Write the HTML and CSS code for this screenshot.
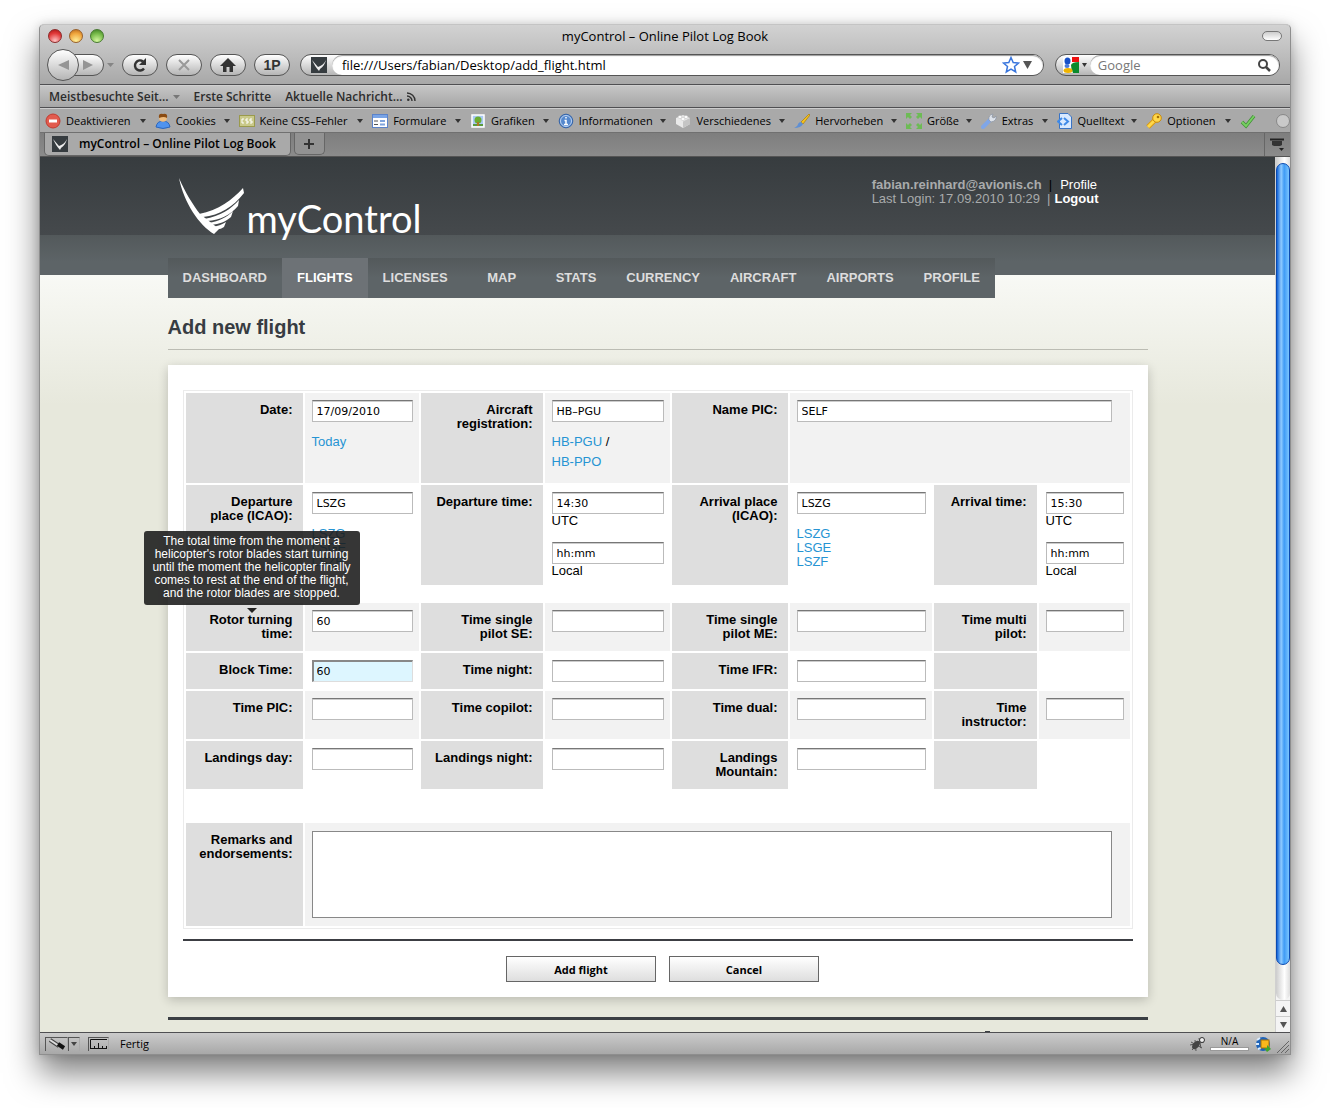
FILE: index.html
```html
<!DOCTYPE html>
<html lang="en">
<head>
<meta charset="utf-8">
<title>myControl – Online Pilot Log Book</title>
<link rel="stylesheet" href="styles.css">
</head>
<body>
<svg class="defs" aria-hidden="true">
  <symbol id="mark" viewBox="0 0 16 16"><rect width="16" height="16" fill="#363c40"/><path d="M1 3 C3 7 5 11 8 14 L9 12 C12 10 14 7 15 3 C13 7 10 9 7 10 C5 8 3 5 1 3Z" fill="#eee"/></symbol>
</svg>
<div class="window">
  <div class="titlebar">
    <div class="lights"><span class="light red"></span><span class="light amber"></span><span class="light green"></span></div>
    <div class="window-title">myControl – Online Pilot Log Book</div>
    <button class="pill-toggle" aria-label="Toggle toolbar"></button>
  </div>

  <div class="navbar">
    <div class="history">
      <button class="back" aria-label="Back"><svg width="12" height="12"><path d="M12 1V11L1 6Z" fill="#959595"/></svg></button>
      <button class="forward" aria-label="Forward"><svg width="10" height="10"><path d="M0 0V10L10 5Z" fill="#959595"/></svg></button>
    </div>
    <svg class="history-arrow" width="7" height="5"><path d="M0 0H7L3.500 4Z" fill="#858585"/></svg>
    <button class="round" aria-label="Reload"><svg width="16" height="16"><path d="M12 11.500A5 5 0 1 1 11 4.500" fill="none" stroke="#333" stroke-width="2.400"/><path d="M14 1V8H7Z" fill="#333"/></svg></button>
    <button class="round" aria-label="Stop"><svg width="12" height="12"><path d="M1 1L11 11M11 1L1 11" stroke="#999" stroke-width="2"/></svg></button>
    <button class="round" aria-label="Home"><svg width="16" height="14"><path d="M8 0L16 8H13V14H9.500V9H6.500V14H3V8H0Z" fill="#333"/></svg></button>
    <button class="round">1P</button>
    <div class="address">
      <svg class="site-mark" width="16" height="16"><use href="#mark"/></svg>
      <div class="address-box">
        <input aria-label="Address" value="file:///Users/fabian/Desktop/add_flight.html">
        <svg width="18" height="18" viewBox="0 0 18 18"><path d="M9 1.500L11.200 6.500L16.500 7L12.500 10.500L13.700 16L9 13.200L4.300 16L5.500 10.500L1.500 7L6.800 6.500Z" fill="#fff" stroke="#3a76dd" stroke-width="1.500"/></svg>
        <svg width="9" height="8"><path d="M0 0H9L4.500 8Z" fill="#555"/></svg>
      </div>
    </div>
    <div class="search">
      <svg class="engine" width="16" height="16"><rect width="16" height="16" fill="#fff"/><path d="M9 0H16V5H9Z" fill="#e11"/><path d="M8 8Q9 5 16 5V16H10Q8 12 8 8Z" fill="#0a8a2c"/><ellipse cx="4.500" cy="4" rx="3" ry="3.500" fill="#1750c8"/><ellipse cx="4" cy="9" rx="2.500" ry="2" fill="#4a79d8"/><ellipse cx="5" cy="13.500" rx="4.500" ry="2.500" fill="#f0b400"/></svg>
      <svg width="5" height="4"><path d="M0 0H5L2.500 4Z" fill="#333"/></svg>
      <div class="search-box">
        <input aria-label="Search" placeholder="Google">
        <svg width="13" height="13"><circle cx="5" cy="5" r="4" fill="none" stroke="#444" stroke-width="2"/><path d="M8 8L12 12" stroke="#444" stroke-width="2.500"/></svg>
      </div>
    </div>
  </div>

  <div class="bookmarks">
    <a href="#">Meistbesuchte Seit… <svg width="7" height="4"><path d="M0 0H7L3.500 4Z" fill="#777"/></svg></a>
    <a href="#">Erste Schritte</a>
    <a href="#">Aktuelle Nachricht… <svg width="9" height="9"><path d="M0 1A8 8 0 0 1 8 9M0 4A5 5 0 0 1 5 9" fill="none" stroke="#333" stroke-width="1.400"/><circle cx="1.300" cy="7.700" r="1.300" fill="#333"/></svg></a>
  </div>

  <div class="devbar">
    <button><svg width="16" height="16"><circle cx="8" cy="8" r="7" fill="#e25b4e" stroke="#c33b30"/><rect x="4" y="6.500" width="8" height="3" fill="#fff"/></svg>Deaktivieren</button>
    <button><svg width="16" height="16"><path d="M1 14Q2 8 8 8T15 14Q8 17 1 14Z" fill="#4f93ee" stroke="#2d66bb"/><circle cx="8" cy="5" r="3.800" fill="#f0bd7e"/><path d="M4 5Q3 0 8 1Q13 0 12 5Q9 3 4 5Z" fill="#8a4b12"/></svg>Cookies</button>
    <button><svg width="16" height="16"><rect x=".5" y="2.500" width="15" height="11" fill="#c9c98a" stroke="#9a9a4c"/><path d="M5 6H3V10H5M9 6H7V8H9V10H7M13 6H11V8H13V10H11" fill="none" stroke="#fff"/></svg>Keine CSS–Fehler</button>
    <button><svg width="16" height="16"><rect x=".5" y="1.500" width="15" height="13" fill="#fff" stroke="#5b83c9"/><path d="M1 3.500H15" stroke="#79a4e6" stroke-width="3"/><path d="M2 8H6M2 11.500H6" stroke="#555"/><path d="M8 8H13M8 11.500H13" stroke="#7fa4dd" stroke-width="2"/></svg>Formulare</button>
    <button><svg width="16" height="16"><rect x="2" y="2" width="12" height="12" fill="#a9c9f4" stroke="#fff" stroke-width="1.500"/><path d="M3 11H13V13H3Z" fill="#5c9b3c"/><circle cx="8" cy="7" r="3.500" fill="#6cae32"/><path d="M8 9V13" stroke="#b0772a" stroke-width="2"/></svg>Grafiken</button>
    <button><svg width="16" height="16"><circle cx="8" cy="8" r="6.800" fill="#5588cd" stroke="#3463a8"/><circle cx="8" cy="8" r="5.500" fill="none" stroke="#bcd3f2"/><path d="M8 4V5.500M6.500 7.500H8V11.500M6 11.500H10" stroke="#fff" stroke-width="1.500" fill="none"/></svg>Informationen</button>
    <button><svg width="16" height="16"><path d="M1 5L8 2L15 5V11L8 15L1 11Z" fill="#e9e9e9"/><path d="M8 8.500L15 5V11L8 15Z" fill="#c5c5c5"/><ellipse cx="5" cy="4" rx="2" ry="1.500" fill="#fff" stroke="#bbb" stroke-width=".5"/><ellipse cx="11" cy="4" rx="2" ry="1.500" fill="#fff" stroke="#bbb" stroke-width=".5"/><ellipse cx="8" cy="6" rx="2" ry="1.500" fill="#fff" stroke="#bbb" stroke-width=".5"/></svg>Verschiedenes</button>
    <button><svg width="16" height="16"><path d="M15 1L7 9L9 11L16 2Z" fill="#f4c11d" stroke="#a97b0a" stroke-width=".7"/><path d="M7 9L9 11Q7 15 0 15Q4 13 4 11Q5 9 7 9Z" fill="#5f8fd3"/></svg>Hervorheben</button>
    <button><svg width="16" height="16" fill="#6dbb55"><path d="M0 0H6L4 2L6 4L4 6L2 4L0 6ZM16 0H10L12 2L10 4L12 6L14 4L16 6ZM0 16H6L4 14L6 12L4 10L2 12L0 10ZM16 16H10L12 14L10 12L12 10L14 12L16 10Z"/></svg>Größe</button>
    <button><svg width="16" height="16"><path d="M2 14L9 7" stroke="#7fa6e8" stroke-width="4" stroke-linecap="round"/><path d="M8 7Q7 2 12 1L11 4L13 5L15 3Q16 8 10 9Z" fill="#dde2ea" stroke="#8a93a3" stroke-width=".7"/></svg>Extras</button>
    <button><svg width="16" height="16"><path d="M2.500 .5H11L14.500 4V15.500H2.500Z" fill="#d8e9ff" stroke="#3973c4"/><path d="M5 5L1 8.500L5 12M7 5L11 8.500L7 12" fill="none" stroke="#3f8ae8" stroke-width="2"/></svg>Quelltext</button>
    <button><svg width="16" height="16"><path d="M2 14L9 7" stroke="#d99a10" stroke-width="5"/><path d="M2 14L9 7" stroke="#ffd84a" stroke-width="3"/><circle cx="11" cy="5" r="4.300" fill="#ffd84a" stroke="#c98a0c"/><circle cx="12" cy="4" r="1.300" fill="#a56f05"/></svg>Optionen</button>
    <span class="check"><svg width="16" height="16"><path d="M2 9L6 13L14 3" fill="none" stroke="#3f8f35" stroke-width="3.500"/><path d="M2 9L6 13L14 3" fill="none" stroke="#77cf62" stroke-width="2"/></svg></span>
    <span class="dot"></span>
  </div>

  <div class="tabs">
    <button class="tab"><svg width="16" height="16"><use href="#mark"/></svg>myControl – Online Pilot Log Book</button>
    <button class="new-tab" aria-label="New tab"><svg width="10" height="10"><path d="M5 0V10M0 5H10" stroke="#333" stroke-width="2"/></svg></button>
    <button class="tab-list" aria-label="List all tabs"><svg width="15" height="13"><path d="M0 1.500H14" stroke="#222" stroke-width="2"/><path d="M2 3H12V7L10 8H4L2 7Z" fill="#333"/><path d="M9 10H14L11.500 13Z" fill="#222"/></svg></button>
  </div>

  <div class="viewport">
    <div class="page">
      <header class="page-head">
        <div class="container head-row">
          <a class="logo" href="#">
            <svg width="66" height="58" viewBox="0 0 66 58" fill="#fff"><path d="M0 0C6 14 14 27 21 36L40 51L35 56C20 47 5 25 0 0Z"/><path d="M20 36C40 32 53 22 64 10L65 15C54 29 41 37 24 39Z"/><path d="M25 41C42 38 52 31 60 22L59 28C51 37 42 42 28 43Z"/><path d="M29 45C41 43 48 39 54 33L52 39C46 44 41 46 32 47Z"/><path d="M33 49Q41 48 47 44L45 49Q41 52 36 51Z"/></svg>
            <span>myControl</span>
          </a>
          <div class="account">
            <div><b>fabian.reinhard@avionis.ch</b><i class="bar dark">|</i><a href="#">Profile</a></div>
            <div>Last Login: 17.09.2010 10:29<i class="bar">|</i><a href="#"><b>Logout</b></a></div>
          </div>
        </div>
      </header>
      <div class="container">
        <nav class="menu">
          <a href="#">Dashboard</a><a href="#" class="current">Flights</a><a href="#">Licenses</a><a href="#" class="short">Map</a><a href="#">Stats</a><a href="#">Currency</a><a href="#">Aircraft</a><a href="#">Airports</a><a href="#">Profile</a>
        </nav>
        <h1>Add new flight</h1>
        <form class="card">
          <div class="sheet">
            <div class="grid">
              <label for="date">Date:</label>
              <div class="field tinted"><input id="date" value="17/09/2010"><p class="picks"><a href="#">Today</a></p></div>
              <label for="reg">Aircraft registration:</label>
              <div class="field tinted"><input id="reg" value="HB–PGU"><p class="picks"><a href="#">HB-PGU</a> /<br><a href="#">HB-PPO</a></p></div>
              <label for="pic">Name PIC:</label>
              <div class="field tinted span3"><input id="pic" value="SELF"></div>

              <label for="dep">Departure place (ICAO):</label>
              <div class="field"><input id="dep" value="LSZG"><p class="codes"><a href="#">LSZG</a><a href="#">LSGE</a><a href="#">LSZF</a></p></div>
              <label for="dep-utc">Departure time:</label>
              <div class="field times"><div><input id="dep-utc" value="14:30">UTC</div><div><input aria-label="Departure time, local" value="hh:mm">Local</div></div>
              <label for="arr">Arrival place (ICAO):</label>
              <div class="field"><input id="arr" value="LSZG"><p class="codes"><a href="#">LSZG</a><a href="#">LSGE</a><a href="#">LSZF</a></p></div>
              <label for="arr-utc">Arrival time:</label>
              <div class="field times"><div><input id="arr-utc" value="15:30">UTC</div><div><input aria-label="Arrival time, local" value="hh:mm">Local</div></div>
            </div>

            <div class="grid">
              <label for="rotor" class="has-tip">Rotor turning time:<span class="tip" role="tooltip">The total time from the moment a helicopter's rotor blades start turning until the moment the helicopter finally comes to rest at the end of the flight, and the rotor blades are stopped.</span></label>
              <div class="field tinted"><input id="rotor" value="60"></div>
              <label for="se">Time single pilot SE:</label><div class="field tinted"><input id="se"></div>
              <label for="me">Time single pilot ME:</label><div class="field tinted"><input id="me"></div>
              <label for="multi">Time multi pilot:</label><div class="field tinted"><input id="multi"></div>

              <label for="block">Block Time:</label><div class="field"><input id="block" class="active" value="60"></div>
              <label for="night">Time night:</label><div class="field"><input id="night"></div>
              <label for="ifr">Time IFR:</label><div class="field"><input id="ifr"></div>
              <div class="blank"></div><div></div>

              <label for="tpic">Time PIC:</label><div class="field tinted"><input id="tpic"></div>
              <label for="cop">Time copilot:</label><div class="field tinted"><input id="cop"></div>
              <label for="dual">Time dual:</label><div class="field tinted"><input id="dual"></div>
              <label for="inst">Time instructor:</label><div class="field tinted"><input id="inst"></div>

              <label for="lday">Landings day:</label><div class="field"><input id="lday"></div>
              <label for="lnight">Landings night:</label><div class="field"><input id="lnight"></div>
              <label for="lmount">Landings Mountain:</label><div class="field"><input id="lmount"></div>
              <div class="blank"></div><div></div>
            </div>

            <div class="grid remarks">
              <label for="remarks">Remarks and endorsements:</label>
              <div class="field tinted span7"><textarea id="remarks"></textarea></div>
            </div>
          </div>
          <div class="actions"><button type="button">Add flight</button><button type="button">Cancel</button></div>
        </form>
        <footer class="page-foot"><span class="foot-mark"></span></footer>
      </div>
    </div>
    <div class="scrollbar">
      <div class="track"><div class="thumb"></div></div>
      <button aria-label="Scroll up"><svg width="7" height="6"><path d="M3.500 0L7 6H0Z" fill="#555"/></svg></button>
      <button aria-label="Scroll down"><svg width="7" height="6"><path d="M3.500 6L7 0H0Z" fill="#555"/></svg></button>
    </div>
  </div>

  <div class="statusbar">
    <span class="tool"><svg width="18" height="13"><path d="M2 2L11 8" stroke="#444" stroke-width="4"/><path d="M2 2L11 8" stroke="#ddd" stroke-width="2"/><path d="M10 6L16 10" stroke="#111" stroke-width="4"/></svg></span>
    <span class="tool narrow"><svg width="6" height="4"><path d="M0 0H6L3 4Z" fill="#444"/></svg></span>
    <span class="tool ruler"><svg width="19" height="12"><path d="M1.500 11V1.500H18M1 10.500H18M5.500 11V8M9.500 11V5M13.500 11V8M17.500 11V8" fill="none" stroke="#111"/></svg></span>
    <span class="status">Fertig</span>
    <svg class="bug" width="17" height="16"><path d="M1 9L15 6M3 14L13 3M7 15L6 4M2 6L13 12M10 2L12 12" stroke="#555"/><ellipse cx="7" cy="9" rx="3" ry="5" transform="rotate(40 7 9)" fill="#444"/><circle cx="13" cy="4" r="2.500" fill="#eee" stroke="#333"/></svg>
    <span class="rank">N/A<span class="rank-bar"></span></span>
    <svg width="16" height="16"><circle cx="8" cy="8" r="7" fill="#1e63b8"/><path d="M2 4L5 2M1 8H4M3 13L6 12" stroke="#d9ecff" stroke-width="2"/><rect x="6" y="4" width="8" height="8" fill="#f9b81d" stroke="#a87208"/><path d="M9 12H12V9L16 13L12 16Z" fill="#41a52c"/></svg>
    <svg class="grip" width="12" height="12"><path d="M0 12L12 0M4 12L12 4M8 12L12 8" stroke="#666"/></svg>
  </div>
</div>
</body>
</html>
```
FILE: styles.css
```css
* { box-sizing: border-box; }

body {
  margin: 0;
  min-height: 100vh;
  padding: 24px 39px 54px;
  display: flex;
  background: #fff;
  font-family: "Liberation Sans", Arial, sans-serif;
  font-size: 13px;
  line-height: 14px;
  color: #000;
}

button, input, textarea { font: inherit; color: inherit; margin: 0; }
button { display: inline-flex; align-items: center; justify-content: center; padding: 0; border: 0; background: none; }
svg { display: block; flex: none; }
a { text-decoration: none; }
p { margin: 0; }
.defs { position: absolute; width: 0; height: 0; }

.window {
  flex: 1;
  min-width: 0;
  display: flex;
  flex-direction: column;
  border: 1px solid #8e8e8e;
  border-top-color: #c4c4c4;
  border-radius: 5px 5px 0 0;
  background: #a7a7a7;
  box-shadow: 0 18px 32px rgba(0, 0, 0, .5), 0 0 10px rgba(0, 0, 0, .15);
}

.titlebar, .navbar, .bookmarks, .devbar, .tabs, .statusbar { font-family: "Open Sans", "Noto Sans", sans-serif; }

/* Browser chrome */
.titlebar {
  display: flex;
  align-items: center;
  justify-content: space-between;
  height: 21px;
  padding: 0 8px;
  border-radius: 4px 4px 0 0;
  background: linear-gradient(#d2d2d2, #c4c4c4);
}
.lights { display: flex; gap: 7px; width: 56px; }
.light { width: 14px; height: 14px; border-radius: 50%; border: 1px solid; }
.red { background: radial-gradient(circle at 50% 90%, #ffc5c5, #e23b3b 60%, #a11); border-color: #8c2a2a; }
.amber { background: radial-gradient(circle at 50% 90%, #fff09a, #f0a63d 60%, #b8651a); border-color: #98602a; }
.green { background: radial-gradient(circle at 50% 90%, #d5f8a0, #75b948 60%, #3b7a22); border-color: #477a30; }
.window-title { font-size: 13px; }
.pill-toggle { width: 20px; height: 10px; margin-left: 36px; border: 1px solid #777; border-radius: 5px; background: linear-gradient(#ccc, #fff); }

.navbar {
  display: flex;
  align-items: center;
  gap: 8px;
  height: 39px;
  padding: 0 10px 0 7px;
  border-bottom: 1px solid #4f4f52;
  background: linear-gradient(#c4c4c4, #a8a8a8);
}
.history { display: flex; align-items: center; }
.back { position: relative; width: 32px; height: 32px; border: 1px solid #555; border-radius: 50%; background: linear-gradient(#fff, #b5b5b5); }
.forward { width: 32px; height: 22px; margin-left: -7px; border: 1px solid #555; border-radius: 0 11px 11px 0; background: linear-gradient(#fff, #b5b5b5); }
.history-arrow { margin-left: -5px; }
.round { width: 36px; height: 22px; border: 1px solid #555; border-radius: 11px; background: linear-gradient(#fff, #b5b5b5); font: bold 14px "Liberation Sans", Arial, sans-serif; color: #333; }
.address, .search { display: flex; align-items: center; height: 22px; border: 1px solid #555; border-radius: 11px; background: linear-gradient(#fff, #b5b5b5); }
.address { flex: 748 1 0; min-width: 0; gap: 5px; margin-left: 2px; padding-left: 10px; }
.search { flex: 221 1 0; min-width: 0; gap: 3px; margin-left: 3px; padding-left: 7px; }
.address-box, .search-box { flex: 1; min-width: 0; display: flex; align-items: center; gap: 3px; height: 20px; border-radius: 10px; background: #fff; padding: 0 11px 0 10px; box-shadow: inset 0 1px 1px #999; }
.search-box { padding: 0 8px; }
.address-box input, .search-box input { flex: 1; min-width: 0; height: 20px; padding: 0; border: 0; outline: 0; background: none; font-size: 13px; }
.search-box input::placeholder { color: #777; opacity: 1; }

.bookmarks {
  display: flex;
  align-items: center;
  gap: 14px;
  height: 23px;
  padding: 0 9px;
  border-top: 1px solid #d0d0d0;
  border-bottom: 1px solid #4f4f52;
  background: linear-gradient(#c5c5c5, #a6a6a6);
  font-size: 12px;
  font-weight: 600;
}
.bookmarks a { display: flex; align-items: center; gap: 4px; color: #2c2c2c; }

.devbar {
  display: grid;
  grid-template-columns: 110fr 84fr 134fr 98fr 88fr 118fr 119fr 112fr 75fr 76fr 90fr 94fr 36fr 11fr;
  align-items: center;
  height: 24px;
  padding-left: 5px;
  border-top: 1px solid #ccc;
  background: #a9a9a9;
  font-size: 11px;
  overflow: hidden;
}
.devbar button { justify-content: flex-start; gap: 5px; padding-right: 9px; white-space: nowrap; min-width: 0; }
.devbar button::after { content: ""; margin-left: auto; border: 3px solid transparent; border-top: 4px solid #333; border-bottom: 0; }
.dot { width: 14px; height: 14px; border: 1px solid #888; border-radius: 50%; background: #c9c9c9; }

.tabs { display: flex; align-items: flex-start; gap: 3px; height: 25px; padding-left: 4px; border-top: 1px solid #707070; border-bottom: 1px solid #555; background: linear-gradient(#7e7e7e, #8b8b8b); }
.tab { gap: 11px; height: 23px; padding: 0 14px 0 7px; border: 1px solid #666; border-top: 0; border-radius: 0 0 5px 5px; background: #a9a9a9; font-size: 12px; font-weight: 600; white-space: nowrap; }
.new-tab { width: 31px; height: 22px; border: 1px solid #666; border-top: 0; border-radius: 0 0 5px 5px; background: #929292; }
.tab-list { width: 26px; height: 23px; margin-left: auto; border-left: 1px solid #666; }

/* Page */
.viewport { flex: 1; display: flex; }
.page { flex: 1; min-width: 0; background: linear-gradient(#f8f9f5, #e7e8dc 130px) 0 118px no-repeat #e7e8dc; }
.container { max-width: 980px; margin: 0 auto; }
.page-head { height: 118px; background: linear-gradient(#373c3f, #45494c 78px, #53595b 78px, #5d6467 105px); }
.head-row { display: flex; justify-content: space-between; align-items: flex-start; padding: 21px 49px 0 11px; }
.logo { display: flex; gap: 2px; color: #fff; }
.logo span { font: 400 38px/40px Lato, sans-serif; padding-top: 20px; }
.account { color: #a9abac; }
.account a { color: #fff; }
.bar { font-style: normal; padding: 0 4px 0 7px; }
.bar.dark { color: #000; padding-right: 8px; }

.menu { display: flex; width: fit-content; margin-top: -17px; background: linear-gradient(#53595b, #5d6467 20px); position: relative; }
.menu a { padding: 0 15px; line-height: 40px; text-align: center; text-transform: uppercase; font-weight: bold; color: #ddd; }
.menu a.current { background: #6d7276; color: #fff; }
.menu a.short { min-width: 78px; }

h1 { margin: 0; padding: 17px 0 10px; border-bottom: 1px solid #bbbcb3; font-size: 20px; line-height: 24px; color: #373c42; }

.card { margin-top: 15px; padding: 25px 15px 15px; background: #fff; box-shadow: 0 3px 10px rgba(0, 0, 0, .2); }
.sheet { padding: 2px; border: 1px solid #ebebeb; display: flex; flex-direction: column; gap: 18px; }
.grid { display: grid; gap: 2px; grid-template-columns: 117fr 114fr 122fr 125fr 116fr 142fr 103fr 91fr; }
.grid > * { min-width: 0; }
.grid > label, .blank { padding: 10px; background: #dedede; text-align: right; font-weight: bold; }
.field { padding: 7px 6px 7px 7px; }
.tinted { background: #f2f2f2; }
.span3 { grid-column: span 3; padding-right: 18px; }
.span7 { grid-column: span 7; padding: 8px 18px 8px 7px; }
.remarks { margin-top: 16px; }

.field input {
  display: block;
  width: 100%;
  height: 22px;
  padding: 0 4px;
  border: 1px solid #bbb;
  border-top: 1px solid #777;
  background: #fff;
  box-shadow: inset 0 1px 0 #ccc;
  font: 11px "DejaVu Sans", sans-serif;
}
.field input.active { border: 1px solid #ddd; border-top: 2px solid #888; border-left: 2px solid #888; padding-left: 3px; background: #ddf6ff; box-shadow: none; outline: 0; }
.field textarea { display: block; width: 100%; height: 87px; border: 1px solid #888; background: #fff; resize: none; }
.field a { color: #2694d3; }
.picks { padding: 10px 0 4px; line-height: 20px; }
.codes { display: flex; flex-direction: column; align-items: flex-start; padding-top: 13px; }
.times { display: flex; flex-direction: column; gap: 14px; }

.has-tip { position: relative; }
.tip {
  position: absolute;
  left: -42px;
  bottom: 46px;
  width: 216px;
  padding: 4px 8px 5px;
  border-radius: 3px;
  background: rgba(26, 26, 26, .88);
  color: #fff;
  font-size: 12px;
  font-weight: normal;
  line-height: 13px;
  text-align: center;
}
.tip::after { content: ""; position: absolute; left: 103px; top: 77px; border: 5px solid transparent; border-top-color: #222; border-bottom: 0; }

.actions { display: flex; justify-content: center; gap: 13px; margin-top: 10px; padding: 15px 0 0 10px; border-top: 2px solid #3c3e43; }
.actions button { width: 150px; height: 26px; border: 1px solid #666; background: linear-gradient(#fff, #dedede); font: bold 11px "Open Sans", sans-serif; }
.page-foot { display: flex; align-items: flex-end; justify-content: flex-end; margin-top: 20px; height: 15px; padding-right: 158px; border-top: 3px solid #3b3f43; }
.foot-mark { width: 5px; height: 1px; background: #3b3f43; }

.scrollbar { width: 15px; display: flex; flex-direction: column; background: #f4f4f4; border-left: 1px solid #d0d0d0; }
.track { flex: 1; padding: 6px 0 35px; border-radius: 0 0 8px 8px; background: linear-gradient(90deg, #ccc, #fff 60%, #ddd); }
.thumb { height: 100%; border: 1px solid #0b4bb0; border-radius: 7px; background: linear-gradient(90deg, #1263d8, #8fcbff 35%, #3f9bf5 60%, #7cc6ff); }
.scrollbar button { height: 16px; border-top: 1px solid #ccc; }

.statusbar { display: flex; align-items: center; height: 22px; padding: 0 1px 0 5px; border-top: 1px solid #4f4f52; background: linear-gradient(#cbcbcb, #a8a8a8); font-size: 11px; }
.tool { display: flex; align-items: center; justify-content: center; width: 23px; height: 14px; border: 1px solid #555; border-right-color: #aaa; border-bottom: 0; }
.tool.narrow { width: 12px; }
.tool.ruler { width: 21px; margin-left: 8px; }
.status { flex: 1; padding-left: 11px; }
.rank { width: 39px; margin: 0 6px 0 4px; text-align: center; font-size: 10px; line-height: 11px; }
.rank-bar { display: block; height: 4px; border: 1px solid #999; background: #fff; }
.grip { margin: 6px 0 0 6px; }
```
